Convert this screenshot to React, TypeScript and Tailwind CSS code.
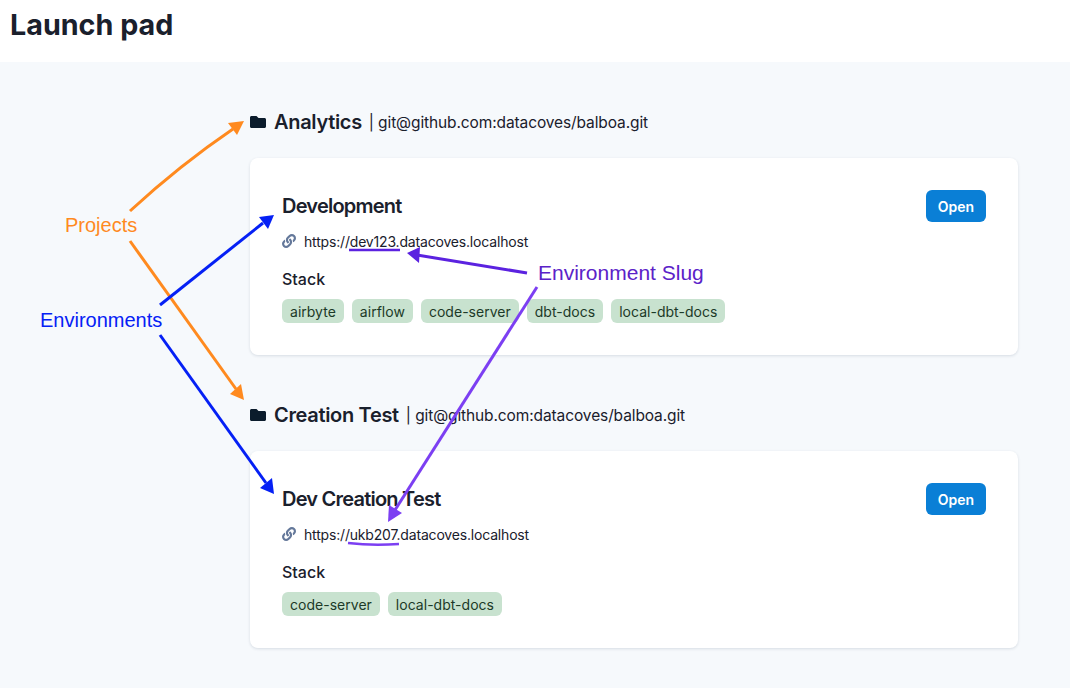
import { FaFolder, FaLink } from "react-icons/fa";

const projects = [
  {
    name: "Analytics",
    env: "Development",
    slug: "dev123",
    stack: ["airbyte", "airflow", "code-server", "dbt-docs", "local-dbt-docs"],
  },
  {
    name: "Creation Test",
    env: "Dev Creation Test",
    slug: "ukb207",
    stack: ["code-server", "local-dbt-docs"],
  },
];

function Arrow({ d, head, color, width = 3 }: { d: string; head: string; color: string; width?: number }) {
  return (
    <g>
      <path d={d} fill="none" stroke={color} strokeWidth={width} />
      <polygon points={head} fill={color} />
    </g>
  );
}

export default function App() {
  return (
    <div className="relative min-h-screen bg-[#f6f9fc] font-['Inter',sans-serif] text-[#1a202c]">
      <header className="flex h-[62px] items-start bg-white px-[10px] pt-[6px]">
        <h1 className="text-[28.7px] leading-[38px] font-bold">Launch pad</h1>
      </header>
      <main className="flex flex-col gap-[48px] pt-[48px] pr-[52px] pl-[250px]">
        {projects.map((p) => (
          <section key={p.name} className="flex flex-col gap-[24px]">
            <div className="flex h-[24px] items-center">
              <FaFolder className="mr-2 text-[16px] text-[#0b1c2c]" />
              <span className="text-[20px] font-semibold tracking-[-0.32px]">{p.name}</span>
              <span className="mt-px ml-[7px] text-[15.5px] tracking-[-0.11px]">| git@github.com:datacoves/balboa.git</span>
            </div>
            <div className="rounded-lg bg-white p-8 shadow-[0_1px_3px_rgba(30,50,80,0.14)]">
              <div className="flex items-start justify-between">
                <div className="flex h-[32px] items-center text-[20px] font-semibold tracking-[-0.78px]">{p.env}</div>
                <button className="h-[32px] w-[60px] rounded-md bg-[#0a7fd6] text-[14px] font-semibold text-white">
                  Open
                </button>
              </div>
              <div className="mt-[9px] flex h-[20px] items-center text-[14px] tracking-[-0.18px]">
                <FaLink className="mr-2 text-[14px] text-[#64789a]" />
                https://{p.slug}.datacoves.localhost
              </div>
              <div className="mt-[16px] h-[24px] text-[16px] leading-[24px] font-medium">Stack</div>
              <div className="mt-2 flex gap-2">
                {p.stack.map((s) => (
                  <span
                    key={s}
                    className="flex h-[24px] items-center rounded-md bg-[#c8e2cf] px-2 text-[14px] font-normal tracking-[0.02px] text-[#1c3a28]"
                  >
                    {s}
                  </span>
                ))}
              </div>
            </div>
          </section>
        ))}
      </main>

      <svg className="pointer-events-none absolute top-0 left-0" width="1070" height="688">
        <Arrow d="M130 211 Q180 165 233 129" head="244,121 228,123 237,135" color="#ff8a1f" />
        <Arrow d="M130 241 L236 389" head="244,400 230,394 241,384" color="#ff8a1f" />
        <Arrow d="M160 305 L263 223" head="274,215 259,217 268,229" color="#0520f5" />
        <Arrow d="M160 335 L266 483" head="274,494 260,488 272,478" color="#0520f5" />
        <Arrow d="M527 273 L417 255" head="407,253 420,247 419,263" color="#5b22e0" />
        <Arrow d="M537 287 L395 510" head="388,522 389,505 402,513" color="#7c3ff2" />
        <path d="M349 250 H400" stroke="#5b22e0" strokeWidth="2.5" fill="none" />
        <path d="M348 543 Q372 546 399 544" stroke="#7c3ff2" strokeWidth="2.5" fill="none" />
      </svg>

      <span className="absolute top-[213px] left-[65px] font-['Liberation_Sans',sans-serif] text-[20px] leading-[24px] text-[#ff8a1f]">
        Projects
      </span>
      <span className="absolute top-[308px] left-[40px] font-['Liberation_Sans',sans-serif] text-[20px] leading-[24px] text-[#0520f5]">
        Environments
      </span>
      <span className="absolute top-[261px] left-[538px] font-['Liberation_Sans',sans-serif] text-[21px] leading-[24px] text-[#5b22c8]">
        Environment Slug
      </span>
    </div>
  );
}
